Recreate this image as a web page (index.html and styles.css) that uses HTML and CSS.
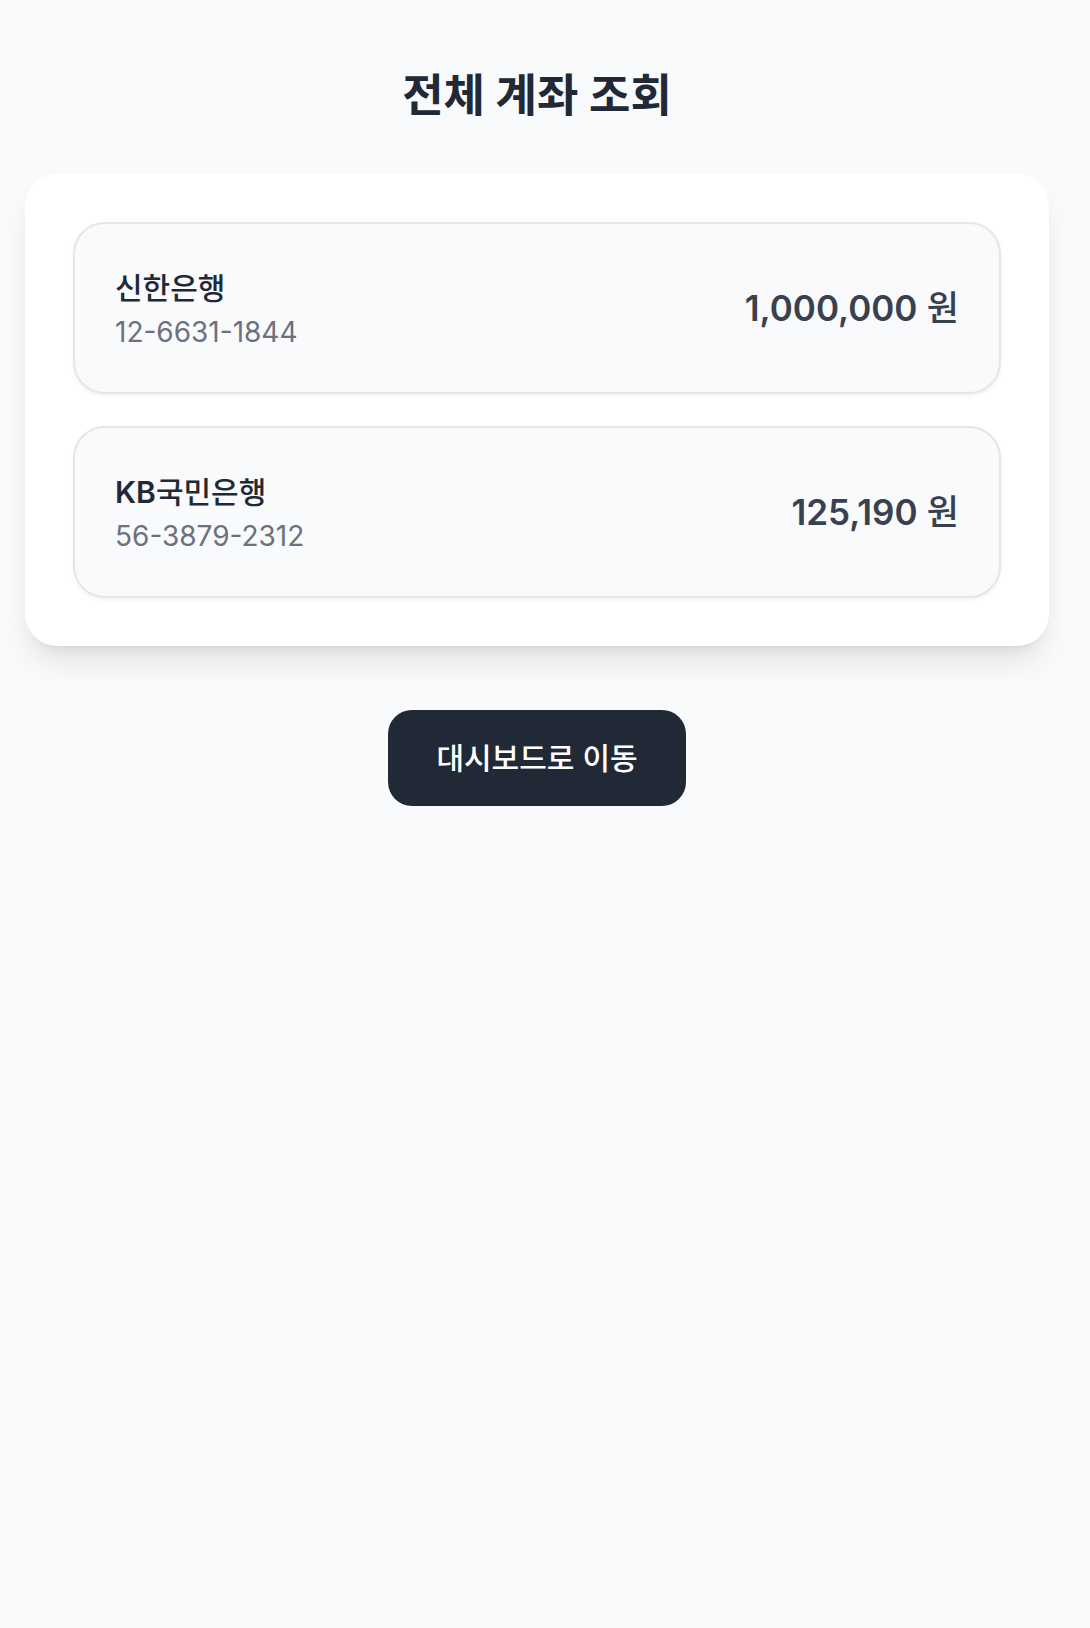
FILE: index.html
```html
<!DOCTYPE html>
<html lang="ko">
<head>
<meta charset="utf-8">
<meta name="viewport" content="width=device-width, initial-scale=1">
<title>전체 계좌 조회</title>
<link rel="stylesheet" href="styles.css">
</head>
<body>
<main class="page">
  <h1 class="title">전체 계좌 조회</h1>
  <ul class="accounts">
    <li class="account">
      <div>
        <p class="bank">신한은행</p>
        <p class="number">12-6631-1844</p>
      </div>
      <p class="balance"><span class="amount">1,000,000</span> 원</p>
    </li>
    <li class="account">
      <div>
        <p class="bank"><span class="latin">KB</span>국민은행</p>
        <p class="number">56-3879-2312</p>
      </div>
      <p class="balance"><span class="amount">125,190</span> 원</p>
    </li>
  </ul>
  <button class="action" type="button">대시보드로 이동</button>
</main>
</body>
</html>
```
FILE: styles.css
```css
* {
  box-sizing: border-box;
  margin: 0;
  padding: 0;
}

body {
  min-height: 100vh;
  background: #f9fafc;
  color: #222936;
  font-family: Inter, "Noto Sans CJK KR", sans-serif;
}

.page {
  display: flex;
  flex-direction: column;
  align-items: center;
  padding: 64px 41px 64px 25px;
}

.title {
  margin-bottom: 46px;
  font-size: 45px;
  font-weight: 700;
  line-height: 64px;
}

.accounts {
  display: flex;
  flex-direction: column;
  gap: 32px;
  width: 100%;
  padding: 48px;
  border-radius: 32px;
  background: #fff;
  box-shadow: 0 20px 30px -6px rgb(0 0 0 / 10%), 0 8px 12px -8px rgb(0 0 0 / 10%);
  list-style: none;
}

.account {
  display: flex;
  justify-content: space-between;
  align-items: center;
  padding: 40px;
  border: 2px solid #e5e6ea;
  border-radius: 32px;
  background: #f9fafc;
  box-shadow: 0 2px 4px rgb(0 0 0 / 5%);
}

.bank {
  font-size: 30px;
  font-weight: 500;
  line-height: 48px;
}

.latin,
.amount {
  font-weight: 600;
}

.number {
  color: #6c717f;
  font-size: 28px;
  line-height: 40px;
}

.balance {
  color: #394150;
  font-size: 35px;
  font-weight: 500;
  line-height: 56px;
}

.action {
  margin-top: 64px;
  padding: 24px 48px;
  border: 0;
  border-radius: 24px;
  background: #222936;
  color: #fff;
  font-family: inherit;
  font-size: 30px;
  font-weight: 500;
  line-height: 48px;
}
```
